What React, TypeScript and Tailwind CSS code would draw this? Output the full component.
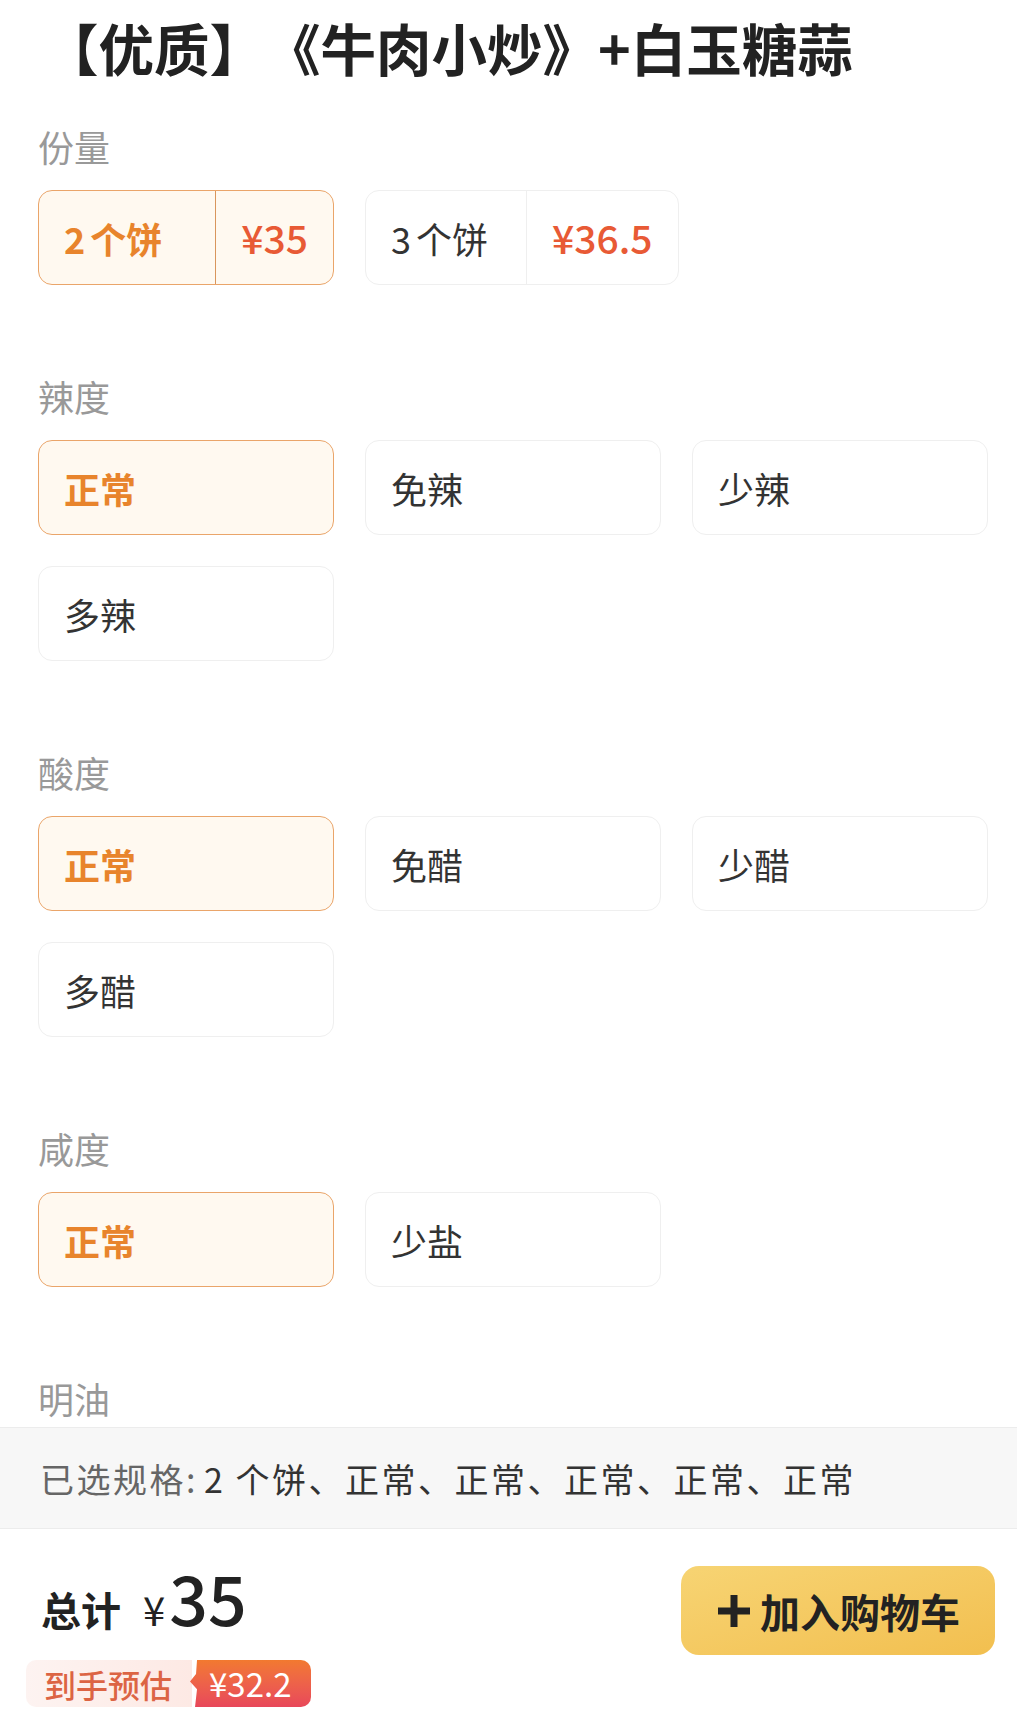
import React from "react"

// spec groups shown in the picker (first option is the selected one)
const groups = [
  { name: "辣度", options: ["正常", "免辣", "少辣", "多辣"] },
  { name: "酸度", options: ["正常", "免醋", "少醋", "多醋"] },
  { name: "咸度", options: ["正常", "少盐"] },
]

const sizes = [
  { num: "2", label: "个饼", price: "¥35" },
  { num: "3", label: "个饼", price: "¥36.5" },
]

function Option({ text, active }: { text: string; active: boolean }) {
  return (
    <div
      className={
        active
          ? "h-[95px] rounded-[14px] border border-[#eaa56a] bg-[#fff9f0] pl-[25px] flex items-center text-[36px] font-bold text-[#e8842c]"
          : "h-[95px] rounded-[14px] border border-[#efefef] bg-white pl-[25px] flex items-center text-[36px] text-[#333]"
      }
    >
      {text}
    </div>
  )
}

export default function App() {
  return (
    <div className="w-[1017px] h-[1726px] bg-white flex flex-col font-['Noto_Sans_CJK_SC',sans-serif] overflow-hidden">
      <div className="h-[1427px] overflow-hidden px-[38px] pr-[29px] shrink-0">
        <h1 className="mt-[13px] pl-[5px] text-[55.5px] leading-[68px] font-bold text-[#222] whitespace-nowrap [text-spacing-trim:space-all]">
          【优质】《牛肉小炒》+白玉糖蒜
        </h1>

        <div className="mt-[41px]">
          <div className="text-[36px] leading-[48px] text-[#999]">份量</div>
          <div className="mt-[20px] flex gap-[31px]">
            {sizes.map((s, i) => (
              <div
                key={s.price}
                className={
                  i === 0
                    ? "h-[95px] min-w-[296px] flex rounded-[14px] border border-[#eaa56a] bg-[#fff9f0]"
                    : "h-[95px] min-w-[296px] flex rounded-[14px] border border-[#efefef] bg-white"
                }
              >
                <div
                  className={
                    i === 0
                      ? "flex-1 pl-[25px] pr-[38px] flex items-center text-[36px] font-bold text-[#e8842c] whitespace-nowrap"
                      : "flex-1 pl-[25px] pr-[38px] flex items-center text-[36px] text-[#333] whitespace-nowrap"
                  }
                >
                  <span className="mr-[5px]">{s.num}</span>
                  {s.label}
                </div>
                <div
                  className={
                    i === 0
                      ? "px-[25px] flex items-center border-l border-[#d9965c] text-[39px] font-medium text-[#e85a35]"
                      : "px-[25px] flex items-center border-l border-[#efefef] text-[39px] font-medium text-[#e85a35]"
                  }
                >
                  {s.price}
                </div>
              </div>
            ))}
          </div>
        </div>

        {groups.map((g) => (
          <div key={g.name} className="mt-[87px]">
            <div className="text-[36px] leading-[48px] text-[#999]">{g.name}</div>
            <div className="mt-[20px] grid grid-cols-3 gap-[31px]">
              {g.options.map((o, i) => (
                <Option key={o} text={o} active={i === 0} />
              ))}
            </div>
          </div>
        ))}

        <div className="mt-[87px]">
          <div className="text-[36px] leading-[48px] text-[#999]">明油</div>
        </div>
      </div>

      {/* selected summary */}
      <div className="h-[102px] shrink-0 bg-[#f7f7f7] border-t border-b border-[#ececec] px-[40px] flex items-center text-[34px] tracking-[2.5px] whitespace-nowrap">
        <span className="text-[#666]">已选规格: </span>
        <span className="ml-[6px] text-[#333]">2 个饼、正常、正常、正常、正常、正常</span>
      </div>

      {/* bottom bar */}
      <div className="flex-1 flex justify-between pl-[26px] pr-[22px]">
        <div className="pt-[34px]">
          <div className="pl-[15px] flex items-baseline text-[#222] leading-none">
            <span className="text-[40px] font-bold">总计</span>
            <span className="ml-[22px] text-[40px]">¥</span>
            <span className="ml-[4px] text-[68px] font-medium">35</span>
          </div>
          <div className="mt-[29px] h-[47px] flex">
            <div className="h-full pl-[18px] pr-[20px] rounded-l-[10px] bg-gradient-to-r from-[#fdf3f1] to-[#fde9e4] flex items-center text-[32px] text-[#dc6444] font-medium">
              到手预估
            </div>
            <div className="-ml-[4px] h-full pl-[21px] pr-[20px] rounded-r-[10px] bg-gradient-to-b from-[#f2792f] to-[#e8475a] flex items-center text-[33px] text-white [clip-path:polygon(9px_0,100%_0,100%_100%,7px_100%,9px_62%,2px_46%,8px_30%)]">
              ¥32.2
            </div>
          </div>
        </div>

        <button className="mt-[37px] w-[314px] h-[89px] rounded-[18px] bg-gradient-to-br from-[#f7d473] to-[#f2bf4f] flex items-center justify-center gap-[8px] text-[40px] font-bold text-[#222]">
          <svg width="36" height="36" viewBox="0 0 36 36">
            <path d="M18 2v32M2 18h32" stroke="#222" strokeWidth="7" />
          </svg>
          加入购物车
        </button>
      </div>
    </div>
  )
}
